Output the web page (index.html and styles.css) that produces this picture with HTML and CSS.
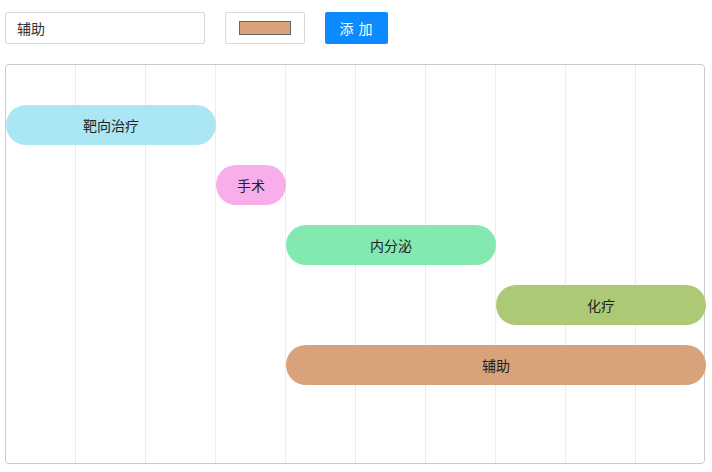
FILE: index.html
```html
<!DOCTYPE html>
<html lang="zh">
<head>
<meta charset="utf-8">
<link rel="stylesheet" href="styles.css">
</head>
<body>
<div class="page">
  <div class="toolbar">
    <input class="name-input" type="text" value="辅助">
    <div class="color-picker"><span class="swatch"></span></div>
    <button class="add-btn">添 加</button>
  </div>
  <div class="chart">
    <div class="bar c-blue" style="grid-row:1;grid-column:1 / span 3">靶向治疗</div>
    <div class="bar c-pink" style="grid-row:2;grid-column:4 / span 1">手术</div>
    <div class="bar c-green" style="grid-row:3;grid-column:5 / span 3">内分泌</div>
    <div class="bar c-olive" style="grid-row:4;grid-column:8 / span 3">化疗</div>
    <div class="bar c-tan" style="grid-row:5;grid-column:5 / span 6">辅助</div>
  </div>
</div>
</body>
</html>
```
FILE: styles.css
```css
* { box-sizing: border-box; }
html, body { margin: 0; padding: 0; background: #fff; }
body {
  font-family: "Noto Sans CJK SC", "Noto Sans", sans-serif;
  font-size: 14px;
  color: #333;
}
.page { padding: 12px 5px 0 5px; width: 712px; }
.toolbar {
  display: flex;
  align-items: center;
  height: 32px;
}
.name-input {
  width: 200px;
  height: 32px;
  border: 1px solid #d9d9d9;
  border-radius: 2px;
  padding: 0 11px 1px;
  font-family: inherit;
  font-size: 14px;
  color: #333;
  outline: none;
  margin: 0;
}
.color-picker {
  margin-left: 20px;
  width: 80px;
  height: 32px;
  border: 1px solid #d9d9d9;
  border-radius: 2px;
  display: flex;
  align-items: center;
  justify-content: center;
}
.swatch {
  width: 52px;
  height: 14px;
  background: #d8a27a;
  border: 1px solid #666;
}
.add-btn {
  margin-left: 20px;
  width: 63px;
  height: 32px;
  background: #0b8bff;
  border: none;
  border-radius: 2px;
  color: #fff;
  font-family: inherit;
  font-size: 14px;
  padding: 0 0 1px;
  letter-spacing: 1px;
}
.chart {
  margin-top: 20px;
  width: 700px;
  height: 400px;
  border: 1px solid #cccccc;
  border-radius: 4px;
  background-image: repeating-linear-gradient(to right, transparent 0, transparent 69px, #ececec 69px, #ececec 70px);
  display: grid;
  grid-template-columns: repeat(10, 70px);
  grid-auto-rows: 40px;
  row-gap: 20px;
  padding-top: 40px;
  align-content: start;
}
.bar {
  border-radius: 20px;
  display: flex;
  align-items: center;
  justify-content: center;
  color: #222;
  font-size: 14px;
  padding-bottom: 1px;
}
.c-blue { background: #abe6f4; }
.c-pink { background: #f7aeea; }
.c-green { background: #83e9b0; }
.c-olive { background: #acca76; }
.c-tan { background: #d8a27a; }
```
